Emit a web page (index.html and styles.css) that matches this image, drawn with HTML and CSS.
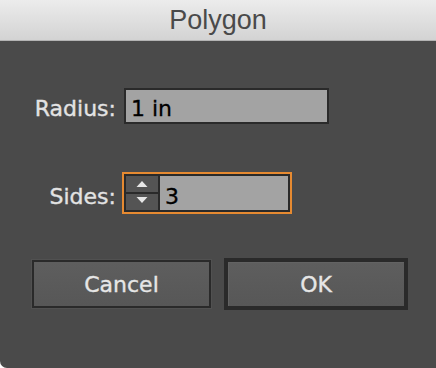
FILE: index.html
```html
<!DOCTYPE html>
<html>
<head>
    <title>Polygon</title>
    <link rel="stylesheet" href="styles.css">
</head>
<body>
    <div class="dialog">
        <div class="titlebar">Polygon</div>
        <div class="content">
            <div class="row">
                <span class="label label-radius">Radius:</span>
                <div class="field">1 in</div>
            </div>
            <div class="row row-sides">
                <span class="label label-sides">Sides:</span>
                <div class="stepper">
                    <div class="spin">
                        <span class="spin-btn">
                            <svg width="32" height="16" viewBox="0 0 32 16"><polygon points="10.5,11 21.5,11 16,5" fill="#e6e6e6"/></svg>
                        </span>
                        <span class="spin-btn">
                            <svg width="32" height="16" viewBox="0 0 32 16"><polygon points="10.5,3 21.5,3 16,9" fill="#e6e6e6"/></svg>
                        </span>
                    </div>
                    <div class="stepper-value">3</div>
                </div>
            </div>
            <div class="buttons">
                <div class="btn btn-cancel">Cancel</div>
                <div class="btn btn-ok">OK</div>
            </div>
        </div>
    </div>
</body>
</html>
```

FILE: styles.css
```css
body {
    margin: 0;
    background: #fff;
    font-family: "DejaVu Sans", sans-serif;
}

.dialog {
    width: 436px;
    height: 368px;
    background: #4a4a4a;
    border-bottom-left-radius: 7px;
    overflow: hidden;
}

.titlebar {
    height: 40px;
    line-height: 41px;
    border-bottom: 1px solid #b3b3b3;
    background: linear-gradient(#ececec, #d3d3d3);
    color: #4a4a4a;
    font-family: "Liberation Sans", Arial, sans-serif;
    font-size: 27px;
    text-align: center;
}

.content {
    padding-top: 47px;
}

.row {
    display: flex;
    align-items: flex-start;
    gap: 8px;
}

.row-sides {
    margin-top: 50px;
}

.label {
    width: 116px;
    text-align: right;
    color: #e3e3e3;
    font-size: 22px;
    line-height: 26px;
    -webkit-text-stroke: 0.35px #e3e3e3;
}

.label-radius {
    margin-top: 8px;
}

.label-sides {
    margin-top: 10px;
}

.field {
    box-sizing: border-box;
    width: 205px;
    height: 36px;
    border: 2px solid #2a2a2a;
    background: #a3a3a3;
    color: #000;
    font-size: 22px;
    line-height: 26px;
    padding: 6px 5px 0;
    -webkit-text-stroke: 0.3px #000;
}

.stepper {
    box-sizing: border-box;
    display: flex;
    width: 166px;
    height: 38px;
    border: 2px solid #2a2a2a;
    background: #2a2a2a;
    outline: 2px solid #e68a31;
}

.spin {
    display: flex;
    flex-direction: column;
    gap: 2px;
    width: 32px;
    margin-right: 2px;
}

.spin-btn {
    display: block;
    height: 16px;
    background: #545454;
}

.spin-btn svg {
    display: block;
}

.stepper-value {
    flex: 1;
    background: #a3a3a3;
    color: #000;
    font-size: 22px;
    line-height: 26px;
    padding: 8px 5px 0;
    -webkit-text-stroke: 0.3px #000;
}

.buttons {
    display: flex;
    margin-top: 48px;
    padding-left: 32px;
    gap: 15px;
}

.btn {
    box-sizing: border-box;
    height: 48px;
    padding-top: 10px;
    border: 2px solid #2a2a2a;
    background: linear-gradient(#5e5e5e, #575757);
    color: #e6e6e6;
    font-size: 22px;
    line-height: 26px;
    text-align: center;
    -webkit-text-stroke: 0.35px #e6e6e6;
}

.btn-cancel {
    width: 179px;
    box-shadow: 0 0 0 1px #515151;
}

.btn-ok {
    width: 180px;
    box-shadow: 0 0 0 2px #2a2a2a, inset 1px 1px 0 #636363;
}
```
